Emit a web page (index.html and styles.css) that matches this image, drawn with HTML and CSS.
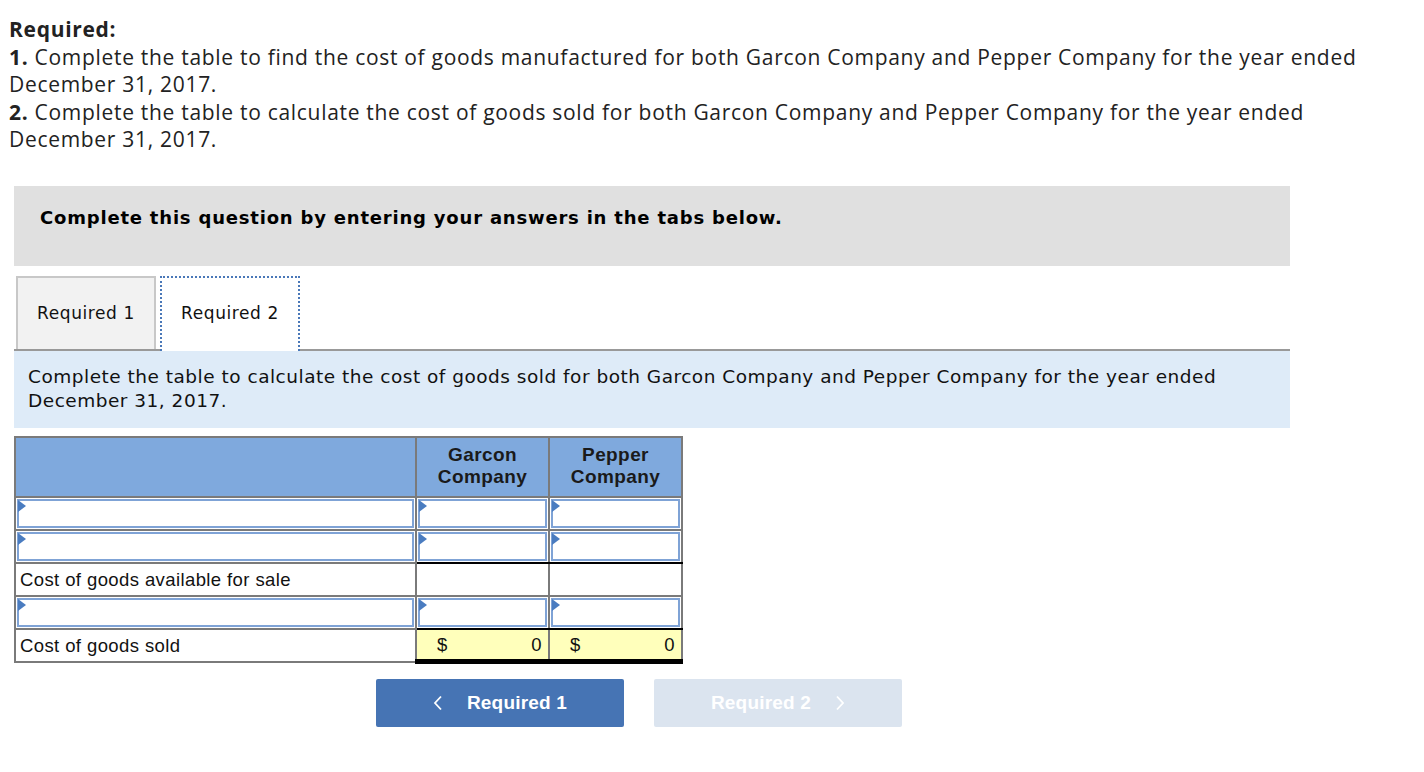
FILE: index.html
```html
<!DOCTYPE html>
<html>
<head>
<meta charset="utf-8">
<link rel="stylesheet" href="styles.css">
</head>
<body>
<div class="page">
  <div class="intro">
    <div><b>Required:</b></div>
    <div><b>1.</b> Complete the table to find the cost of goods manufactured for both Garcon Company and Pepper Company for the year ended<br>December 31, 2017.</div>
    <div><b>2.</b> Complete the table to calculate the cost of goods sold for both Garcon Company and Pepper Company for the year ended<br>December 31, 2017.</div>
  </div>

  <div class="notice">Complete this question by entering your answers in the tabs below.</div>

  <div class="tabs">
    <div class="tab">Required 1</div>
    <div class="tab active">Required 2</div>
  </div>

  <div class="prompt">Complete the table to calculate the cost of goods sold for both Garcon Company and Pepper Company for the year ended<br>December 31, 2017.</div>

  <table class="grid">
    <colgroup>
      <col class="c-label">
      <col class="c-amt">
      <col class="c-amt">
    </colgroup>
    <tr class="head">
      <th></th>
      <th>Garcon<br>Company</th>
      <th>Pepper<br>Company</th>
    </tr>
    <tr>
      <td class="inp"><div class="box"><span class="flag"></span></div></td>
      <td class="inp"><div class="box"><span class="flag"></span></div></td>
      <td class="inp"><div class="box"><span class="flag"></span></div></td>
    </tr>
    <tr>
      <td class="inp"><div class="box"><span class="flag"></span></div></td>
      <td class="inp ul"><div class="box"><span class="flag"></span></div></td>
      <td class="inp ul"><div class="box"><span class="flag"></span></div></td>
    </tr>
    <tr>
      <td class="label">Cost of goods available for sale</td>
      <td class="amt"></td>
      <td class="amt"></td>
    </tr>
    <tr>
      <td class="inp"><div class="box"><span class="flag"></span></div></td>
      <td class="inp ul"><div class="box"><span class="flag"></span></div></td>
      <td class="inp ul"><div class="box"><span class="flag"></span></div></td>
    </tr>
    <tr>
      <td class="label">Cost of goods sold</td>
      <td class="total"><span>$</span><span>0</span></td>
      <td class="total"><span>$</span><span>0</span></td>
    </tr>
  </table>

  <div class="nav">
    <div class="btn prev">
      <svg class="chev left" width="10" height="16" viewBox="0 0 10 16"><path d="M8 1.5 L2 8 L8 14.5" fill="none" stroke="#fff" stroke-width="1.8"/></svg>
      <span>Required 1</span>
    </div>
    <div class="btn next">
      <span>Required 2</span>
      <svg class="chev right" width="10" height="16" viewBox="0 0 10 16"><path d="M2 1.5 L8 8 L2 14.5" fill="none" stroke="#fff" stroke-width="1.8"/></svg>
    </div>
  </div>
</div>
</body>
</html>
```

FILE: styles.css
```css
html, body {
  margin: 0;
  padding: 0;
  background: #ffffff;
}

.page {
  padding: 16px 0 0 0;
  width: 1424px;
}

.intro {
  font-family: "Open Sans", "Lato", sans-serif;
  font-size: 21px;
  line-height: 27.6px;
  color: #222;
  padding: 0 0 0 9px;
  width: 1400px;
  letter-spacing: 0.7px;
}

.intro b {
  font-weight: 700;
}

.notice {
  margin: 32px 0 0 14px;
  width: 1276px;
  height: 80px;
  box-sizing: border-box;
  background: #e0e0e0;
  padding: 21px 0 0 26px;
  font-family: "DejaVu Sans", Verdana, sans-serif;
  font-weight: 700;
  font-size: 18px;
  letter-spacing: 0.8px;
  color: #000;
}

.tabs {
  display: flex;
  gap: 4px;
  margin: 10px 0 0 16px;
  height: 73px;
}

.tab {
  width: 140px;
  box-sizing: border-box;
  border: 2px solid #c8c8c8;
  border-bottom: none;
  background: #f2f2f2;
  font-family: "DejaVu Sans", Verdana, sans-serif;
  font-size: 17px;
  letter-spacing: 0.6px;
  color: #111;
  display: flex;
  justify-content: center;
  padding-top: 25px;
}

.tab.active {
  background: #fff;
  border: 2px dotted #4a78b8;
  border-bottom: none;
  position: relative;
  z-index: 1;
  height: 75px;
}

.prompt {
  margin: 0 0 0 14px;
  width: 1276px;
  box-sizing: border-box;
  border-top: 2px solid #999;
  background: #deebf8;
  padding: 14px 14px 15px 14px;
  height: 79px;
  font-family: "DejaVu Sans", Verdana, sans-serif;
  font-size: 18.5px;
  letter-spacing: 0.5px;
  line-height: 24px;
  color: #111;
}

.grid {
  margin: 8px 0 0 14px;
  border-collapse: collapse;
  width: 666px;
  table-layout: fixed;
  font-family: "Liberation Sans", Arial, sans-serif;
  font-size: 18.5px;
  letter-spacing: 0.4px;
  color: #111;
}

.c-label { width: 401px; }
.c-amt { width: 133px; }

.grid td, .grid th {
  border: 2px solid #7a7a7a;
  padding: 0;
}

.grid tr.head th {
  background: #7fa9dd;
  height: 52px;
  font-weight: 700;
  font-size: 19px;
  line-height: 22px;
  text-align: center;
  vertical-align: top;
  padding-top: 6px;
  color: #1a1a1a;
}

.grid td.inp {
  padding: 1px;
}

.box {
  position: relative;
  height: 25px;
  border: 2px solid #7fa3d6;
  background: #fff;
}

.flag {
  position: absolute;
  left: -1px;
  top: -1px;
  width: 0;
  height: 0;
  border-top: 6px solid transparent;
  border-bottom: 6px solid transparent;
  border-left: 8px solid #4a7cc0;
}

.grid td.ul {
  border-bottom: 2px solid #000;
}

.grid td.label {
  padding: 2px 0 0 4px;
  height: 29px;
  vertical-align: middle;
}

.grid td.amt {
  height: 31px;
}

.grid td.total {
  background: #ffffbb;
  border-bottom: 5px solid #000;
  height: 29px;
  padding: 0 6px 0 20px;
}

.grid td.total span:first-child {
  float: left;
}

.grid td.total span:last-child {
  float: right;
}

.nav {
  display: flex;
  gap: 30px;
  margin: 15px 0 0 376px;
}

.btn {
  width: 248px;
  height: 48px;
  border-radius: 2px;
  display: flex;
  align-items: center;
  justify-content: center;
  font-family: "Liberation Sans", Arial, sans-serif;
  font-weight: 700;
  font-size: 19px;
  letter-spacing: 0.2px;
  color: #fff;
}

.btn.prev {
  background: #4674b4;
}

.btn.next {
  background: #dbe4ef;
}

.chev.left {
  margin-right: 24px;
}

.chev.right {
  margin-left: 24px;
}
```
